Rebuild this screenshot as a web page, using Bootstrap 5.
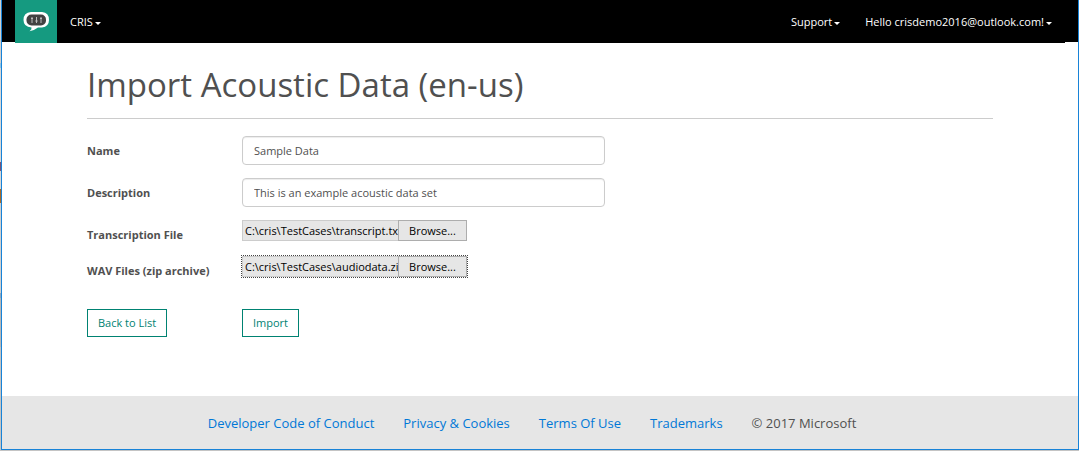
<!DOCTYPE html>
<html lang="en">
<head>
<meta charset="utf-8">
<meta name="viewport" content="width=device-width, initial-scale=1">
<title>Import Acoustic Data</title>
<link href="https://cdn.jsdelivr.net/npm/bootstrap@5.3.0/dist/css/bootstrap.min.css" rel="stylesheet">
<style>
  body { font-family: "Segoe UI", "Open Sans", "Noto Sans", sans-serif; font-size: 11px; line-height: 16px; color: #505050; padding: 0 0 1px 1px;
    background: linear-gradient(#d0d0d0 0 14%, #8fc4e6 14% 15%, #d8d8d8 15% 36%, #7a5578 36% 38%, #d8d8d8 38% 42%, #a86a2a 42% 45%, #d0d0d0 45% 65%, #8fa8c0 65% 66%, #b8b8b8 66% 77%, #c4c4c4 77%); }
  .app-window { min-height: calc(100vh - 1px); border: solid #1883d7; border-width: 0 1px 1px; }
  .topbar { height: 42px; }
  .topbar-inner { height: 43px; margin: 0 13px; }
  .brand-tile { width: 42px; height: 43px; background: #159a80; }
  .topbar .nav-link { color: #fff; padding: 0; }
  .topbar .dropdown-toggle::after { margin-left: 2px; vertical-align: 1px; border-width: 3px 3px 0; }
  .topbar .site-link { margin-left: 13px; }
  .topbar .user-link { margin: 0 13px 0 25px; }
  .content { max-width: 930px; }
  h1 { font-size: 33px; line-height: 42px; font-weight: 400; margin: 22px 0 12px; }
  .rule { border-top: 1px solid #ccc; opacity: 1; margin: 0 0 17px; }
  .form-label { font-weight: 700; }
  .form-control { font-size: 11px; line-height: 16px; height: 29px; padding: 5px 11px; color: #505050; border-color: #ccc; border-radius: 4px; box-shadow: inset 0 1px 1px rgba(0,0,0,.075); }
  .field-row { margin-bottom: 13px; }
  .file-row { margin-bottom: 15px; }
  .file-row .form-label { padding-top: 7px; margin-bottom: -4px; }
  .picker { width: 225px; height: 21px; }
  .picker-active { outline: 1px dotted #444; }
  .picker-path { width: 156px; border: 1px solid #ccc; border-right: 0; background: #e6e6e6; color: #000; padding: 0 0 0 2px; border-radius: 0; }
  .picker-btn { width: 69px; border: 1px solid #adadad; background: #e6e6e6; color: #000; padding: 0; }
  .form-actions { padding-top: 17px; }
  .btn-line { color: #008272; border: 1px solid #008272; border-radius: 0; font-size: 11px; line-height: 16px; padding: 5px 10px; }
  .footer-bar { background: #e6e6e6; height: 53px; font-size: 13px; line-height: 20px; gap: 29px; padding-right: 16px; }
  .footer-bar a { color: #0078d7; text-decoration: none; }
</style>
</head>
<body>
<div class="app-window bg-white d-flex flex-column">
  <header class="topbar bg-black">
    <nav class="topbar-inner bg-black d-flex align-items-center" aria-label="Main">
      <a href="#" class="brand-tile d-flex" aria-label="Home">
        <svg width="42" height="43" viewBox="0 0 42 43" aria-hidden="true">
          <path d="M16 12H27Q34 12.500 34 20Q34 26.500 27 27.500H23Q20 30 14.500 31.200Q17 29.500 16.500 27.500Q8.500 27 8.500 20Q8.500 12.500 16 12Z" fill="#fff"/>
          <rect x="11.500" y="14.500" width="19.500" height="11" rx="5" fill="#424242"/>
          <path d="M17 17V23M21.500 17V23M26 17V23M16 18.500H18M20.300 21H22.700M25 18.500H27" stroke="#bbb" stroke-width="1"/>
        </svg>
      </a>
      <a href="#" class="nav-link dropdown-toggle site-link">CRIS</a>
      <a href="#" class="nav-link dropdown-toggle ms-auto">Support</a>
      <a href="#" class="nav-link dropdown-toggle user-link">Hello crisdemo2016@outlook.com!</a>
    </nav>
  </header>

  <main class="content container flex-grow-1">
    <h1>Import Acoustic Data (en-us)</h1>
    <hr class="rule">
    <form>
      <div class="row field-row align-items-center">
        <label class="col-2 form-label text-nowrap mb-0" for="name">Name</label>
        <div class="col-5"><input class="form-control" id="name" type="text" value="Sample Data"></div>
      </div>
      <div class="row field-row align-items-center">
        <label class="col-2 form-label text-nowrap mb-0" for="description">Description</label>
        <div class="col-5"><input class="form-control" id="description" type="text" value="This is an example acoustic data set"></div>
      </div>
      <div class="row file-row">
        <label class="col-2 form-label text-nowrap" for="transcript">Transcription File</label>
        <div class="col-5"><div class="picker d-flex">
          <input class="picker-path" id="transcript" type="text" readonly value="C:\cris\TestCases\transcript.txt">
          <button class="picker-btn" type="button">Browse...</button>
        </div></div>
      </div>
      <div class="row file-row">
        <label class="col-2 form-label text-nowrap" for="wav">WAV Files (zip archive)</label>
        <div class="col-5"><div class="picker picker-active d-flex">
          <input class="picker-path" id="wav" type="text" readonly value="C:\cris\TestCases\audiodata.zip">
          <button class="picker-btn" type="button">Browse...</button>
        </div></div>
      </div>
      <div class="row form-actions">
        <div class="col-2"><a class="btn btn-line" href="#">Back to List</a></div>
        <div class="col-5"><button class="btn btn-line" type="submit">Import</button></div>
      </div>
    </form>
  </main>

  <footer class="footer-bar d-flex flex-wrap justify-content-center align-items-center">
    <a href="#">Developer Code of Conduct</a>
    <a href="#">Privacy &amp; Cookies</a>
    <a href="#">Terms Of Use</a>
    <a href="#">Trademarks</a>
    <span>© 2017 Microsoft</span>
  </footer>
</div>
<script src="https://cdn.jsdelivr.net/npm/bootstrap@5.3.0/dist/js/bootstrap.bundle.min.js"></script>
</body>
</html>
